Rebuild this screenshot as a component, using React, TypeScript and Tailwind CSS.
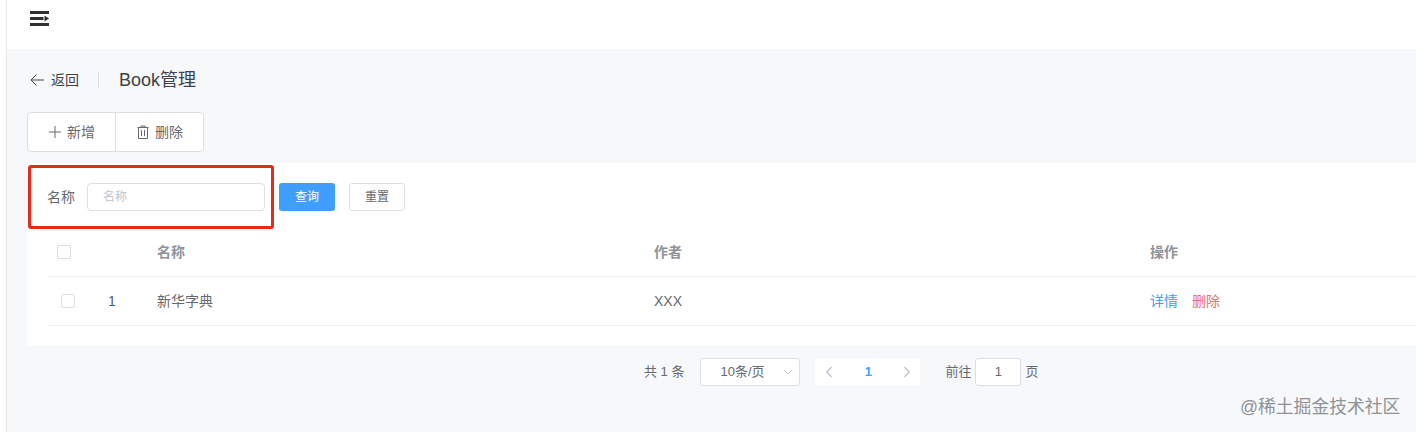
import { ChevronDown, ChevronLeft, ChevronRight } from "lucide-react";

const font = { fontFamily: '"Liberation Sans", "Noto Sans CJK SC", sans-serif' };

const Checkbox = () => (
  <span className="block w-[14px] h-[14px] bg-white border border-[#dcdfe6] rounded-[2px]" />
);

export default function App() {
  return (
    <div className="h-[432px] w-[1416px] overflow-hidden flex bg-white text-[#666a70]" style={font}>
      {/* sidebar edge */}
      <div className="w-[7px] shrink-0 bg-white border-r border-[#e6e6e6]" />

      <div className="flex-1 min-w-0 flex flex-col">
        <div className="h-[49px] shrink-0 bg-white pl-[23px] pt-[11px]">
          <svg width="20" height="16" viewBox="0 0 20 16" fill="#303133" className="block">
            <rect x="0" y="0" width="19" height="3" />
            <rect x="0" y="6" width="13.5" height="3" />
            <path d="M14.5 4.5 L19 7.5 L14.5 10.5 Z" />
            <rect x="0" y="12" width="19" height="3" />
          </svg>
        </div>

        <div className="flex-1 bg-[#f6f8fa] pl-[20px] flex flex-col">
          {/* page header */}
          <div className="h-[24px] mt-[19px] flex items-center">
            <svg width="16" height="16" viewBox="0 0 16 16" fill="none" stroke="#404246" strokeWidth="1" className="ml-[2px]">
              <path d="M15 8H2.5M7.5 2.5L2 8l5.5 5.5" />
            </svg>
            <span className="ml-[6px] text-[14px] text-[#404246]">返回</span>
            <span className="ml-[19px] w-px h-[16px] bg-[#dcdfe6]" />
            <span className="ml-[20px] text-[18px] text-[#404246]">Book管理</span>
          </div>

          {/* actions */}
          <div className="mt-[20px] flex w-[177px] h-[40px] bg-white border border-[#dcdfe6] rounded-[4px] text-[14px]">
            <div className="w-[88px] flex items-center justify-center gap-[5px] border-r border-[#dcdfe6]">
              <svg width="14" height="14" viewBox="0 0 14 14" fill="none" stroke="#666a70" strokeWidth="1">
                <path d="M7 1v12M1 7h12" />
              </svg>
              <span>新增</span>
            </div>
            <div className="flex-1 flex items-center justify-center gap-[5px]">
              <svg width="14" height="14" viewBox="0 0 14 14" fill="none" stroke="#666a70" strokeWidth="1">
                <path d="M1.5 2.5h11M5 2.5V1h4v1.5M2.5 2.5v11h9v-11M5.5 5v6M8.5 5v6" />
              </svg>
              <span>删除</span>
            </div>
          </div>

          {/* card */}
          <div className="relative mt-[11px] h-[183px] bg-white">
            <div className="flex items-center pt-[20px] h-[48px] text-[14px]">
              <span className="ml-[20px] w-[40px]">名称</span>
              <div className="w-[178px] h-[28px] border border-[#dcdfe6] rounded-[4px] pl-[15px] flex items-center text-[12px] text-[#c0c4cc]">
                名称
              </div>
              <button className="ml-[14px] w-[56px] h-[28px] rounded-[3px] bg-[#409eff] text-white text-[12px]">查询</button>
              <button className="ml-[14px] w-[56px] h-[28px] rounded-[3px] bg-white border border-[#dcdfe6] text-[12px]">重置</button>
            </div>

            <div className="ml-[21px] mt-[17px] h-[49px] grid grid-cols-[109px_497px_496px_1fr] items-center border-b border-[#ebeef5] text-[14px] font-bold text-[#909399]">
              <span className="pl-[9px]"><Checkbox /></span>
              <span>名称</span>
              <span>作者</span>
              <span>操作</span>
            </div>
            <div className="ml-[21px] h-[49px] grid grid-cols-[109px_497px_496px_1fr] items-center border-b border-[#ebeef5] text-[14px]">
              <span className="flex items-center pl-[13px]">
                <Checkbox />
                <span className="ml-[33px] text-[#47617a]">1</span>
              </span>
              <span>新华字典</span>
              <span>XXX</span>
              <span className="flex gap-[14px]">
                <span className="text-[#409eff]">详情</span>
                <span className="text-[#e8706b]">删除</span>
              </span>
            </div>

            {/* highlight box */}
            <div className="absolute left-[1px] top-[2px] w-[246px] h-[64px] border-[3px] border-[#e8291c] rounded-[3px]" />
          </div>

          {/* pagination */}
          <div className="mt-[12px] h-[28px] flex items-center text-[13px] pl-[617px]">
            <span>共 1 条</span>
            <div className="ml-[16px] w-[100px] h-[28px] bg-white border border-[#dcdfe6] rounded-[3px] flex items-center pl-[19px] pr-[3px] justify-between">
              <span>10条/页</span>
              <ChevronDown size={16} strokeWidth={1.5} className="text-[#c0c4cc]" />
            </div>
            <div className="ml-[15px] w-[105px] h-[28px] bg-white flex items-center justify-between pl-[5px] pr-[4px]">
              <ChevronLeft size={18} strokeWidth={2} className="text-[#c0c4cc]" />
              <span className="font-bold text-[#409eff]">1</span>
              <ChevronRight size={18} strokeWidth={2} className="text-[#c0c4cc]" />
            </div>
            <span className="ml-[25px]">前往</span>
            <div className="ml-[4px] w-[46px] h-[28px] bg-white border border-[#dcdfe6] rounded-[3px] flex items-center justify-center">1</div>
            <span className="ml-[4px]">页</span>
          </div>
        </div>
      </div>

      {/* watermark */}
      <div className="absolute left-[1240px] top-[395px] text-[17.8px] leading-[24px] text-[#8f9296]">@稀土掘金技术社区</div>
    </div>
  );
}
